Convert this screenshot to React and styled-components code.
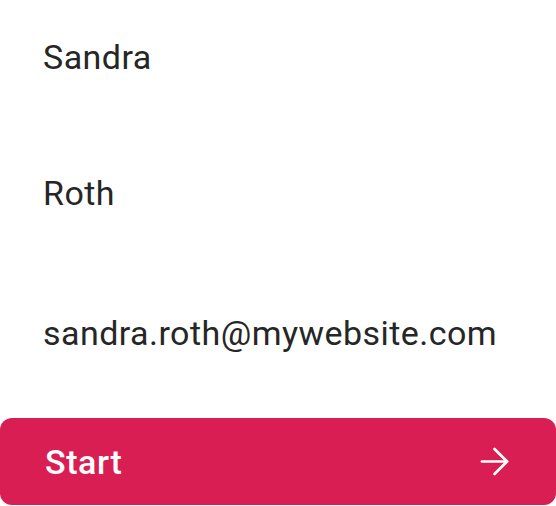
import React from 'react'
import styled, { createGlobalStyle } from 'styled-components'
import { ArrowRight } from 'lucide-react'

const GlobalStyle = createGlobalStyle`
  html, body {
    margin: 0;
    padding: 0;
    background: #ffffff;
  }
  body {
    font-family: Roboto, "Liberation Sans", sans-serif;
  }
`

const Page = styled.div`
  display: flex;
  flex-direction: column;
  width: 556px;
  height: 506px;
  overflow: hidden;
`

const Field = styled.div`
  margin-top: ${props => props.$top}px;
  padding: 0 43px;
  font-size: 34px;
  line-height: 40px;
  color: #262626;
  letter-spacing: 0.45px;
`

const StartButton = styled.button`
  display: flex;
  align-items: center;
  justify-content: space-between;
  margin-top: 65px;
  height: 87px;
  width: 100%;
  padding: 0 40px 0 45px;
  border: none;
  border-radius: 12px;
  background: #d91e53;
  color: #ffffff;
  font-family: Roboto, "Liberation Sans", sans-serif;
  font-size: 34px;
  font-weight: 500;
  letter-spacing: 0.6px;
  cursor: pointer;
  box-sizing: border-box;

  &:focus {
    outline: none;
  }
`

export default function App() {
  return (
    <Page>
      <GlobalStyle />
      <Field $top={37}>Sandra</Field>
      <Field $top={96}>Roth</Field>
      <Field $top={100}>sandra.roth@mywebsite.com</Field>
      <StartButton>
        Start
        <ArrowRight size={43} strokeWidth={1.5} />
      </StartButton>
    </Page>
  )
}
